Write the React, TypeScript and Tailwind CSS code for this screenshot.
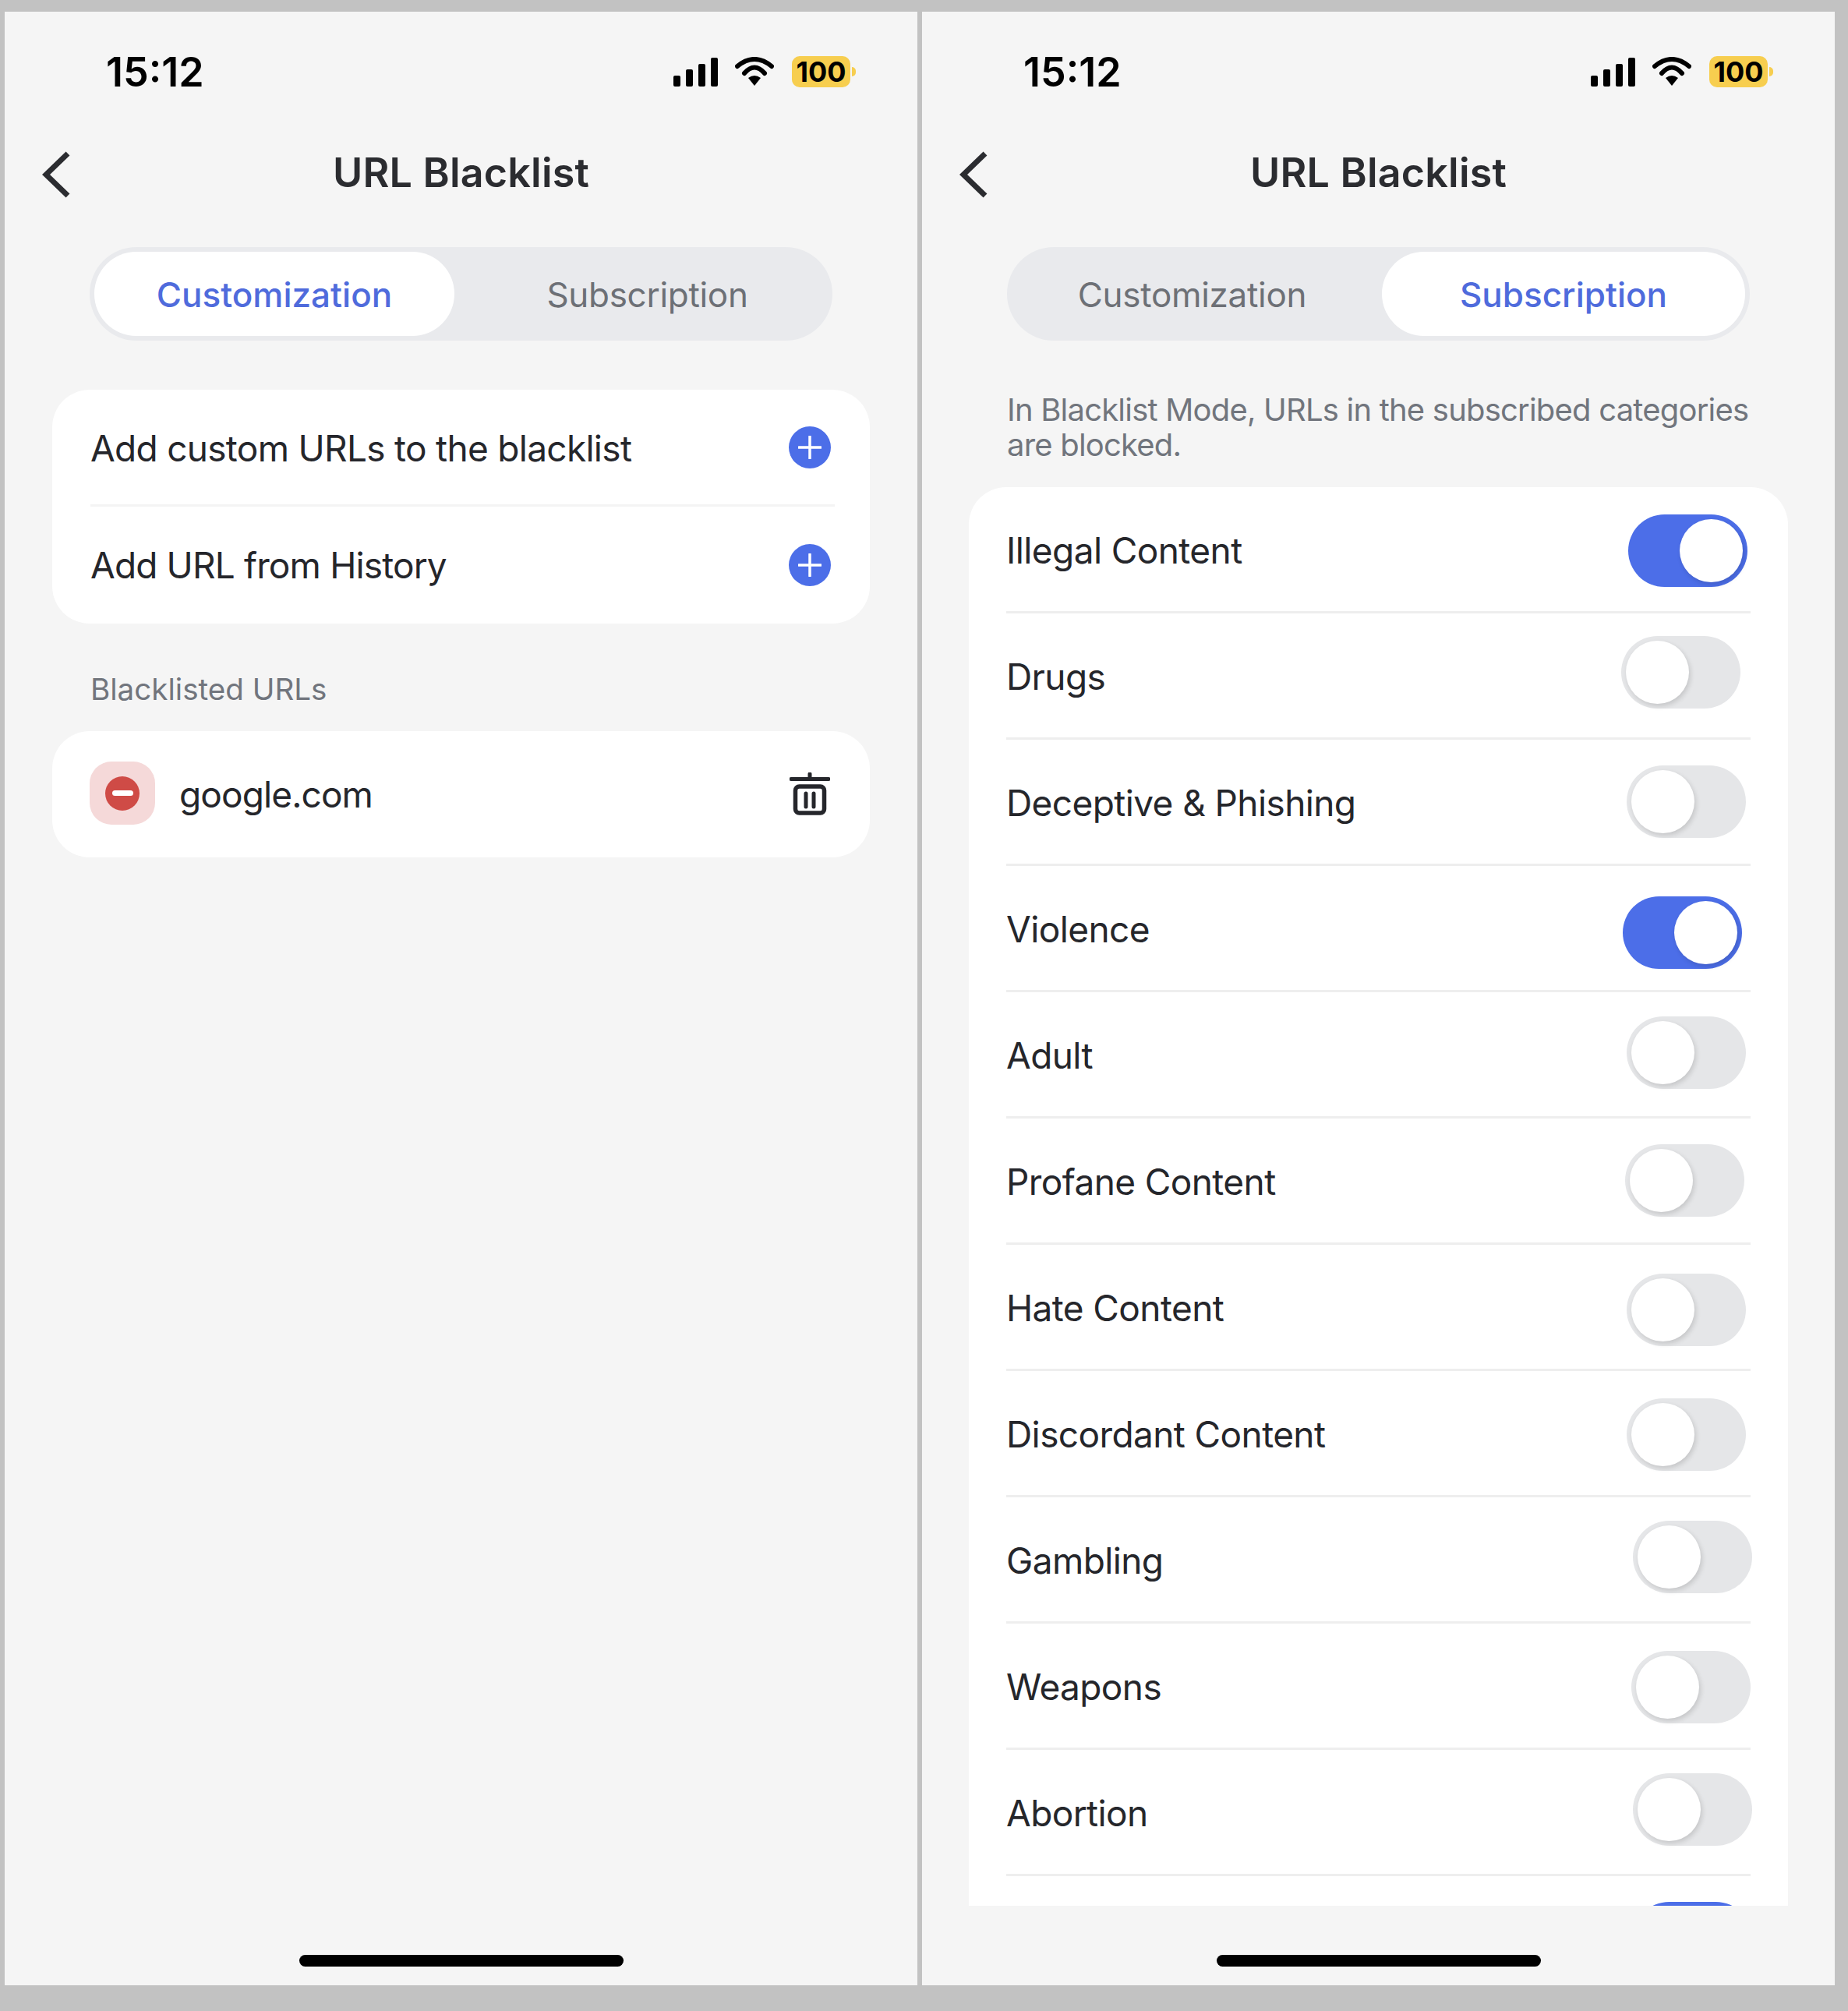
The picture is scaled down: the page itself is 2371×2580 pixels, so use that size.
const TOGGLES = [
  { label: "Illegal Content", on: true, shift: "mr-[4px] translate-y-[2px]" },
  { label: "Drugs", on: false, shift: "mr-[13px] translate-y-[-4px]" },
  { label: "Deceptive & Phishing", on: false, shift: "mr-[6px]" },
  { label: "Violence", on: true, shift: "mr-[11px] translate-y-[6px]" },
  { label: "Adult", on: false, shift: "mr-[6px] translate-y-[-2px]" },
  { label: "Profane Content", on: false, shift: "mr-[8px]" },
  { label: "Hate Content", on: false, shift: "mr-[6px] translate-y-[4px]" },
  { label: "Discordant Content", on: false, shift: "mr-[6px] translate-y-[2px]" },
  { label: "Gambling", on: false, shift: "mr-[-2px] translate-y-[-3px]" },
  { label: "Weapons", on: false, shift: "mr-[0px] translate-y-[2px]" },
  { label: "Abortion", on: false, shift: "mr-[-2px] translate-y-[-3px]" },
  { label: "", on: true, shift: "mr-[-2px]" },
];

function StatusBar() {
  return (
    <div className="h-[154px] flex items-center justify-between pl-[130px] pr-[79px] shrink-0">
      <span className="text-[52px] font-semibold text-black mt-[2px]">15:12</span>
      <div className="flex items-center gap-[22px]">
        <div className="flex items-end gap-[7px] h-[37px]">
          <div className="w-[9px] h-[14px] bg-black rounded-[2px]" />
          <div className="w-[9px] h-[22px] bg-black rounded-[2px]" />
          <div className="w-[9px] h-[29px] bg-black rounded-[2px]" />
          <div className="w-[9px] h-[37px] bg-black rounded-[2px]" />
        </div>
        <svg width="50" height="38" viewBox="0 0 50 38" fill="none">
          <path d="M3 12Q25 -6 47 12" stroke="black" strokeWidth="6" strokeLinecap="round" />
          <path d="M12 21Q25 6 38 21" stroke="black" strokeWidth="6" strokeLinecap="round" />
          <path d="M17 27Q25 21 33 27L25 37Z" fill="black" />
        </svg>
        <div className="flex items-center ml-[1px]">
          <div className="w-[75px] h-[40px] rounded-[10px] bg-[#f7ce4f] flex items-center justify-center text-[36px] font-bold text-black leading-none">
            100
          </div>
          <div className="w-[5px] h-[12px] ml-[2px] rounded-r-full bg-[#f7ce4f]" />
        </div>
      </div>
    </div>
  );
}

function NavBar() {
  return (
    <div className="relative h-[108px] flex items-center justify-center shrink-0">
      <svg width="37" height="60" viewBox="0 0 37 60" fill="none" className="absolute left-[48px] top-[25px]">
        <path d="M33 3L5 30L33 57" stroke="#2b2c30" strokeWidth="7" />
      </svg>
      <span className="text-[52px] font-semibold tracking-[0.2px] text-[#2b2c30] mt-[-3px]">URL Blacklist</span>
    </div>
  );
}

function Tabs({ active }: { active: "customization" | "subscription" }) {
  const customization = active === "customization";
  return (
    <div className="mx-[109px] mt-[40px] h-[120px] rounded-full bg-[#e9eaed] p-[6px] flex items-stretch text-[44px] shrink-0">
      {customization ? (
        <>
          <div className="w-[462px] rounded-full bg-white flex items-center justify-center text-[#4f6bdc] font-medium pt-[2px]">
            Customization
          </div>
          <div className="flex-1 flex items-center justify-center text-[#6d7076] tracking-[-0.3px] pl-[16px] pt-[2px]">
            Subscription
          </div>
        </>
      ) : (
        <>
          <div className="flex-1 flex items-center justify-center text-[#6d7076] tracking-[-0.3px] pr-[12px] pt-[2px]">
            Customization
          </div>
          <div className="w-[466px] rounded-full bg-white flex items-center justify-center text-[#4f6bdc] font-medium pt-[2px]">
            Subscription
          </div>
        </>
      )}
    </div>
  );
}

function PlusButton() {
  return (
    <div className="mr-[5px] w-[54px] h-[54px] rounded-full bg-[#4c6ee8] flex items-center justify-center">
      <svg width="30" height="30" viewBox="0 0 30 30" fill="none">
        <path d="M15 1V29M1 15H29" stroke="white" strokeWidth="3.5" strokeLinecap="round" />
      </svg>
    </div>
  );
}

function CustomizationPanel() {
  return (
    <>
      <div className="mx-[61px] mt-[63px] bg-white rounded-[48px] pl-[49px] pr-[45px] shrink-0">
        <div className="h-[150px] flex items-center justify-between border-b-[3px] border-[#f4f4f4]">
          <span className="text-[46px] tracking-[-0.7px] text-[#25262b] mt-[4px]">
            Add custom URLs to the blacklist
          </span>
          <PlusButton />
        </div>
        <div className="h-[150px] flex items-center justify-between">
          <span className="text-[46px] tracking-[-0.85px] text-[#25262b]">Add URL from History</span>
          <PlusButton />
        </div>
      </div>
      <p className="mx-[110px] mt-[61px] text-[38.6px] leading-[46px] text-[#71757d]">Blacklisted URLs</p>
      <div className="mx-[61px] mt-[31px] h-[162px] bg-white rounded-[48px] pl-[48px] pr-[51px] flex items-center shrink-0">
        <div className="w-[84px] h-[81px] rounded-[28px] bg-[#f5d9d9] flex items-center justify-center mt-[-3px]">
          <div className="w-[44px] h-[44px] rounded-full bg-[#cf4b46] flex items-center justify-center">
            <div className="w-[27px] h-[7px] rounded-full bg-white" />
          </div>
        </div>
        <span className="ml-[31px] text-[46px] tracking-[-0.9px] text-[#25262b] flex-1">google.com</span>
        <svg width="52" height="55" viewBox="0 0 52 55" fill="none" className="mt-[-2px]">
          <path d="M2 8.5H50M26 2V8" stroke="#25262b" strokeWidth="5" strokeLinecap="round" />
          <rect x="7.5" y="18" width="37" height="34" rx="5" stroke="#25262b" strokeWidth="5.5" />
          <path d="M21 27V44M31 27V44" stroke="#25262b" strokeWidth="5" strokeLinecap="round" />
        </svg>
      </div>
    </>
  );
}

function Toggle({ on, shift }: { on: boolean; shift: string }) {
  return (
    <div
      className={`${shift} w-[153px] h-[93px] rounded-full p-[6px] flex shrink-0 ${
        on ? "bg-[#4c6ee8] justify-end" : "bg-[#e5e6e8] justify-start"
      }`}
    >
      <div className="w-[81px] h-[81px] rounded-full bg-white shadow-[2px_3px_6px_rgba(0,0,0,0.14)]" />
    </div>
  );
}

function SubscriptionPanel() {
  return (
    <>
      <p className="ml-[109px] mr-[60px] mt-[66px] text-[40px] tracking-[-0.8px] leading-[45px] text-[#71757d]">
        In Blacklist Mode, URLs in the subscribed categories
        <br />
        are blocked.
      </p>
      <div className="mx-[60px] mt-[32px] h-[1820px] bg-white rounded-t-[48px] overflow-hidden shrink-0">
        {TOGGLES.map((row) => (
          <div
            key={row.label || "last"}
            className="mx-[48px] h-[162px] flex items-center justify-between border-b-[3px] border-[#eeeeee]"
          >
            <span className="text-[46px] tracking-[-0.6px] text-[#25262b] mt-[4px]">{row.label}</span>
            <Toggle on={row.on} shift={row.shift} />
          </div>
        ))}
      </div>
    </>
  );
}

function Phone({ tab }: { tab: "customization" | "subscription" }) {
  return (
    <div className="w-[1171px] h-[2532px] bg-[#f5f5f5] flex flex-col shrink-0">
      <StatusBar />
      <NavBar />
      <Tabs active={tab} />
      {tab === "customization" ? <CustomizationPanel /> : <SubscriptionPanel />}
      <div className="mt-auto mb-[24px] w-[416px] h-[15px] rounded-full bg-black self-center shrink-0" />
    </div>
  );
}

export default function App() {
  return (
    <div className="w-[2371px] h-[2580px] bg-[#c2c2c2] pt-[15px] pl-[6px] flex gap-[6px] font-['Inter',sans-serif]">
      <Phone tab="customization" />
      <Phone tab="subscription" />
    </div>
  );
}
